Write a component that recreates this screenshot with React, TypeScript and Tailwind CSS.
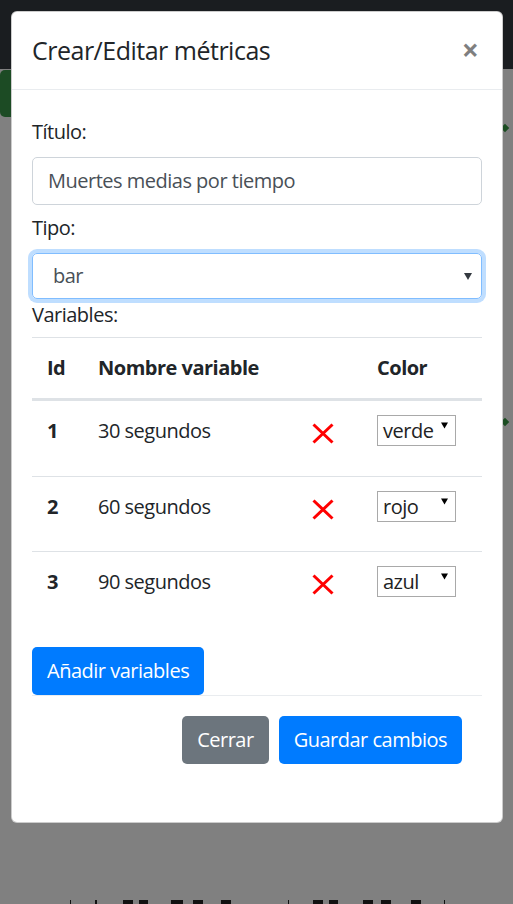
import React from "react";

function RedX() {
  return (
    <svg width="22" height="21" viewBox="0 0 22 21" className="block">
      <path d="M1.5 1.5 L20.5 19.5 M20.5 1.5 L1.5 19.5" stroke="#ff0000" strokeWidth="3" fill="none" />
    </svg>
  );
}

function Tri({ color = "#000", w = 8, h = 8 }: { color?: string; w?: number; h?: number }) {
  return (
    <svg width={w} height={h} viewBox="0 0 8 8" className="block">
      <path d="M0 1 L8 1 L4 8 Z" fill={color} />
    </svg>
  );
}

const rows = [
  { id: "1", name: "30 segundos", color: "verde" },
  { id: "2", name: "60 segundos", color: "rojo" },
  { id: "3", name: "90 segundos", color: "azul" },
];

export default function App() {
  return (
    <div
      className="relative h-[904px] w-[513px] overflow-hidden bg-[#808080] text-[#212529] tracking-[-0.5px]"
      style={{ fontFamily: '"Open Sans", "Noto Sans", sans-serif' }}
    >
      {/* page behind the modal */}
      <div className="h-[69px] bg-[#1a1d20]" />
      <div className="mt-px flex">
        <div className="h-[47px] w-[60px] rounded-[5px] bg-[#1c4b24]" />
      </div>
      <div className="flex justify-end pr-[5px] pt-[8px]">
        <div className="h-[6px] w-[6px] rotate-45 bg-[#1b4d22]" />
      </div>
      <div className="flex justify-end pr-[5px] pt-[288px]">
        <div className="h-[6px] w-[6px] rotate-45 bg-[#1b4d22]" />
      </div>
      <div className="mt-[475px] flex h-[4px]">
        <div className="ml-[70px] w-px bg-[#111]" />
        <div className="ml-[24px] w-[2px] bg-[#111]" />
        <div className="ml-[26px] w-[10px] bg-[#111]" />
        <div className="ml-[6px] w-[9px] bg-[#111]" />
        <div className="ml-[23px] w-[12px] bg-[#111]" />
        <div className="ml-[10px] w-[10px] bg-[#111]" />
        <div className="ml-[18px] w-[10px] bg-[#111]" />
        <div className="ml-[57px] w-px bg-[#111]" />
        <div className="ml-[24px] w-[10px] bg-[#111]" />
        <div className="ml-[6px] w-[9px] bg-[#111]" />
        <div className="ml-[25px] w-[10px] bg-[#111]" />
        <div className="ml-[8px] w-[10px] bg-[#111]" />
        <div className="ml-[20px] w-[10px] bg-[#111]" />
        <div className="ml-[23px] w-px bg-[#111]" />
      </div>

      {/* modal */}
      <div className="absolute left-[11px] top-[11px] w-[492px] rounded-[6px] border border-black/20 bg-white">
        <div className="flex h-[78px] items-center justify-between border-b border-[#e9ecef] pl-[20px] pr-[23px]">
          <h5 className="text-[25px] font-medium leading-[37.5px] text-[#212529]">Crear/Editar métricas</h5>
          <span className="-mt-[2px] text-[30px] font-bold leading-none tracking-normal text-black/50">×</span>
        </div>
        <div className="px-[20px] pb-[38px] pt-[27px] text-[20px] leading-[30px]">
          <div className="mb-[10px]">Título:</div>
          <div className="flex h-[48px] items-center rounded-[5px] border border-[#ced4da] px-[15px] text-[#495057]">
            Muertes medias por tiempo
          </div>
          <div className="mb-[10px] mt-[8px]">Tipo:</div>
          <div className="flex h-[46px] items-center justify-between rounded-[5px] border border-[#80bdff] pl-[20px] pr-[9px] text-[#495057] shadow-[0_0_0_4px_rgba(0,123,255,0.25)]">
            <span>bar</span>
            <Tri color="#343a40" w={8} h={8} />
          </div>
          <div className="mb-[7px] mt-px">Variables:</div>

          <div className="grid grid-cols-[51px_205px_74px_120px] border-b-2 border-t border-[#dee2e6] font-bold">
            <div className="py-[15px] pl-[15px]">Id</div>
            <div className="py-[15px] pl-[15px]">Nombre variable</div>
            <div className="py-[15px]" />
            <div className="py-[15px] pl-[15px]">Color</div>
          </div>
          {rows.map((r) => (
            <div key={r.id} className="grid h-[75.5px] grid-cols-[51px_205px_74px_120px] border-t border-[#dee2e6]">
              <div className="pl-[15px] pt-[15px] font-bold">{r.id}</div>
              <div className="pl-[15px] pt-[15px]">{r.name}</div>
              <div className="pl-[24px] pt-[22px]">
                <RedX />
              </div>
              <div className="pl-[15px] pt-[14px]">
                <div className="flex h-[31px] w-[79px] items-start justify-between border border-[#a9a9a9] pl-[5px] pr-[7px] text-[20px] leading-[29px] text-[#222]">
                  <span>{r.color}</span>
                  <div className="pt-[5px]">
                    <Tri color="#000" w={7} h={8} />
                  </div>
                </div>
              </div>
            </div>
          ))}

          <div className="mt-[20px] flex">
            <button className="h-[48px] rounded-[5px] bg-[#007bff] px-[15px] text-[20px] leading-[30px] tracking-[-0.5px] text-white">
              Añadir variables
            </button>
          </div>
          <div className="flex justify-end gap-[10px] border-t border-[#e9ecef] px-[20px] pb-[20px] pt-[20px]">
            <button className="h-[48px] rounded-[5px] bg-[#6c757d] px-[15px] text-[20px] leading-[30px] tracking-[-0.5px] text-white">
              Cerrar
            </button>
            <button className="h-[48px] rounded-[5px] bg-[#007bff] px-[15px] text-[20px] leading-[30px] tracking-[-0.5px] text-white">
              Guardar cambios
            </button>
          </div>
        </div>
      </div>
    </div>
  );
}
